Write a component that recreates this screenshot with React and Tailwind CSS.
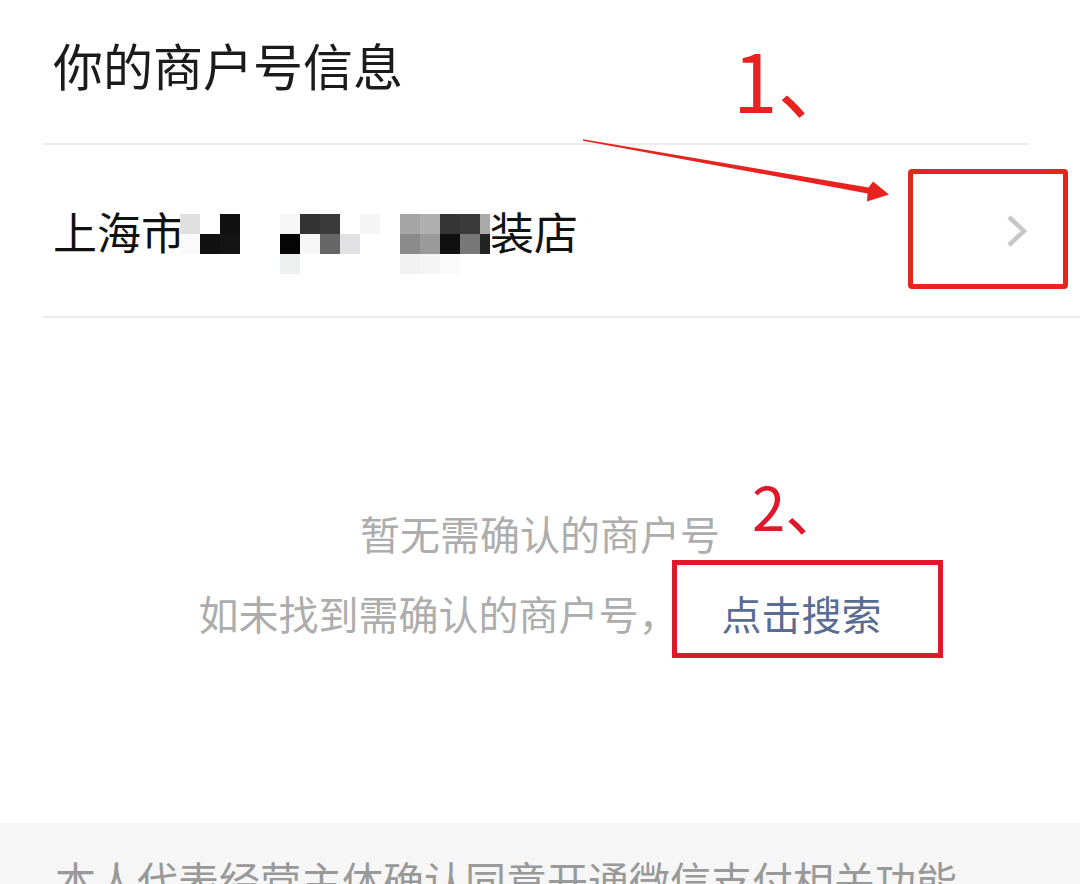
const MOSAIC = [
  ['bg-[#e0e0e0]', 'bg-white', 'bg-[#111]', 'bg-white', 'bg-white', 'bg-[#f6f6f6]', 'bg-[#333]', 'bg-[#3a3a3a]', 'bg-white', 'bg-[#f5f5f5]', 'bg-white', 'bg-[#a5a5a5]', 'bg-[#b0b0b0]', 'bg-[#353535]', 'bg-[#3a3a3a]', 'bg-[#aaa]'],
  ['bg-[#fafafa]', 'bg-[#111]', 'bg-[#141414]', 'bg-white', 'bg-white', 'bg-[#050505]', 'bg-[#f7f7f7]', 'bg-[#666]', 'bg-[#e2e2e5]', 'bg-white', 'bg-white', 'bg-[#8a8a8a]', 'bg-[#9a9a9a]', 'bg-[#101010]', 'bg-[#777]', 'bg-[#222]'],
  ['bg-white', 'bg-white', 'bg-white', 'bg-white', 'bg-white', 'bg-[#eef0f0]', 'bg-white', 'bg-white', 'bg-white', 'bg-white', 'bg-white', 'bg-[#f2f2f2]', 'bg-[#f5f5f5]', 'bg-[#fafafa]', 'bg-white', 'bg-white'],
];

function Mosaic() {
  return (
    <div className="grid grid-cols-[repeat(15,20px)_10px] grid-rows-[20px_20px_20px] ml-[-5px] mt-[26px] shrink-0">
      {MOSAIC.flat().map((c, i) => (
        <div key={i} className={c} />
      ))}
    </div>
  );
}

function Chevron() {
  return (
    <svg width="22" height="34" viewBox="0 0 22 34" fill="none">
      <polyline points="3,3 18,17 3,31" stroke="#c7c7c7" strokeWidth="4.5" />
    </svg>
  );
}

export default function App() {
  return (
    <div className="relative w-[1080px] h-[884px] overflow-hidden bg-white flex flex-col font-['Noto_Sans_CJK_SC',sans-serif]">
      {/* Header */}
      <div className="h-[143px] shrink-0 pl-[53px] pt-[39px] text-[50px] leading-[50px] text-[#1b1b1b]">
        你的商户号信息
      </div>
      <div className="h-[2px] shrink-0 ml-[43px] mr-[51px] bg-[#ececec]" />

      {/* Merchant row */}
      <div className="h-[173px] shrink-0 ml-[43px] border-b-2 border-[#ececec] flex items-center justify-between pl-[10px] pr-[52px]">
        <div className="flex items-center text-[44px] leading-[44px] text-[#111] whitespace-nowrap">
          <span>上海市</span>
          <Mosaic />
          <span>装店</span>
        </div>
        <Chevron />
      </div>

      {/* Empty state */}
      <div className="h-[505px] shrink-0 flex flex-col items-center pt-[195px] gap-[40px] text-[40px] leading-[40px] text-[#adadad] whitespace-nowrap">
        <div>暂无需确认的商户号</div>
        <div className="flex">
          <span>如未找到需确认的商户号，</span>
          <span className="ml-[43px] text-[#586c94]">点击搜索</span>
        </div>
      </div>

      {/* Footer band */}
      <div className="flex-1 bg-[#f6f6f6] pt-[36px] pl-[55px] text-[41px] leading-[41px] text-[#999] whitespace-nowrap">
        本人代表经营主体确认同意开通微信支付相关功能
      </div>

      {/* Annotations */}
      <div className="absolute left-[733px] top-[38px] text-[80px] leading-[80px] text-[#e8231f] whitespace-nowrap">
        1、
      </div>
      <svg className="absolute left-[580px] top-[135px]" width="315" height="72" viewBox="580 135 315 72">
        <polygon
          points="583,139.3 868.5,187.4 873,181.5 889,194.5 867,201.5 867.5,193.4 582.9,140.7"
          fill="#e8231f"
        />
      </svg>
      <div className="absolute left-[908px] top-[169px] w-[160px] h-[120px] border-[5px] border-[#e5261f] rounded-[4px]" />

      <div className="absolute left-[752px] top-[475px] text-[60px] leading-[60px] text-[#e2172a] whitespace-nowrap">
        2、
      </div>
      <div className="absolute left-[672px] top-[560px] w-[271px] h-[98px] border-[5px] border-[#e2172a]" />
    </div>
  );
}
